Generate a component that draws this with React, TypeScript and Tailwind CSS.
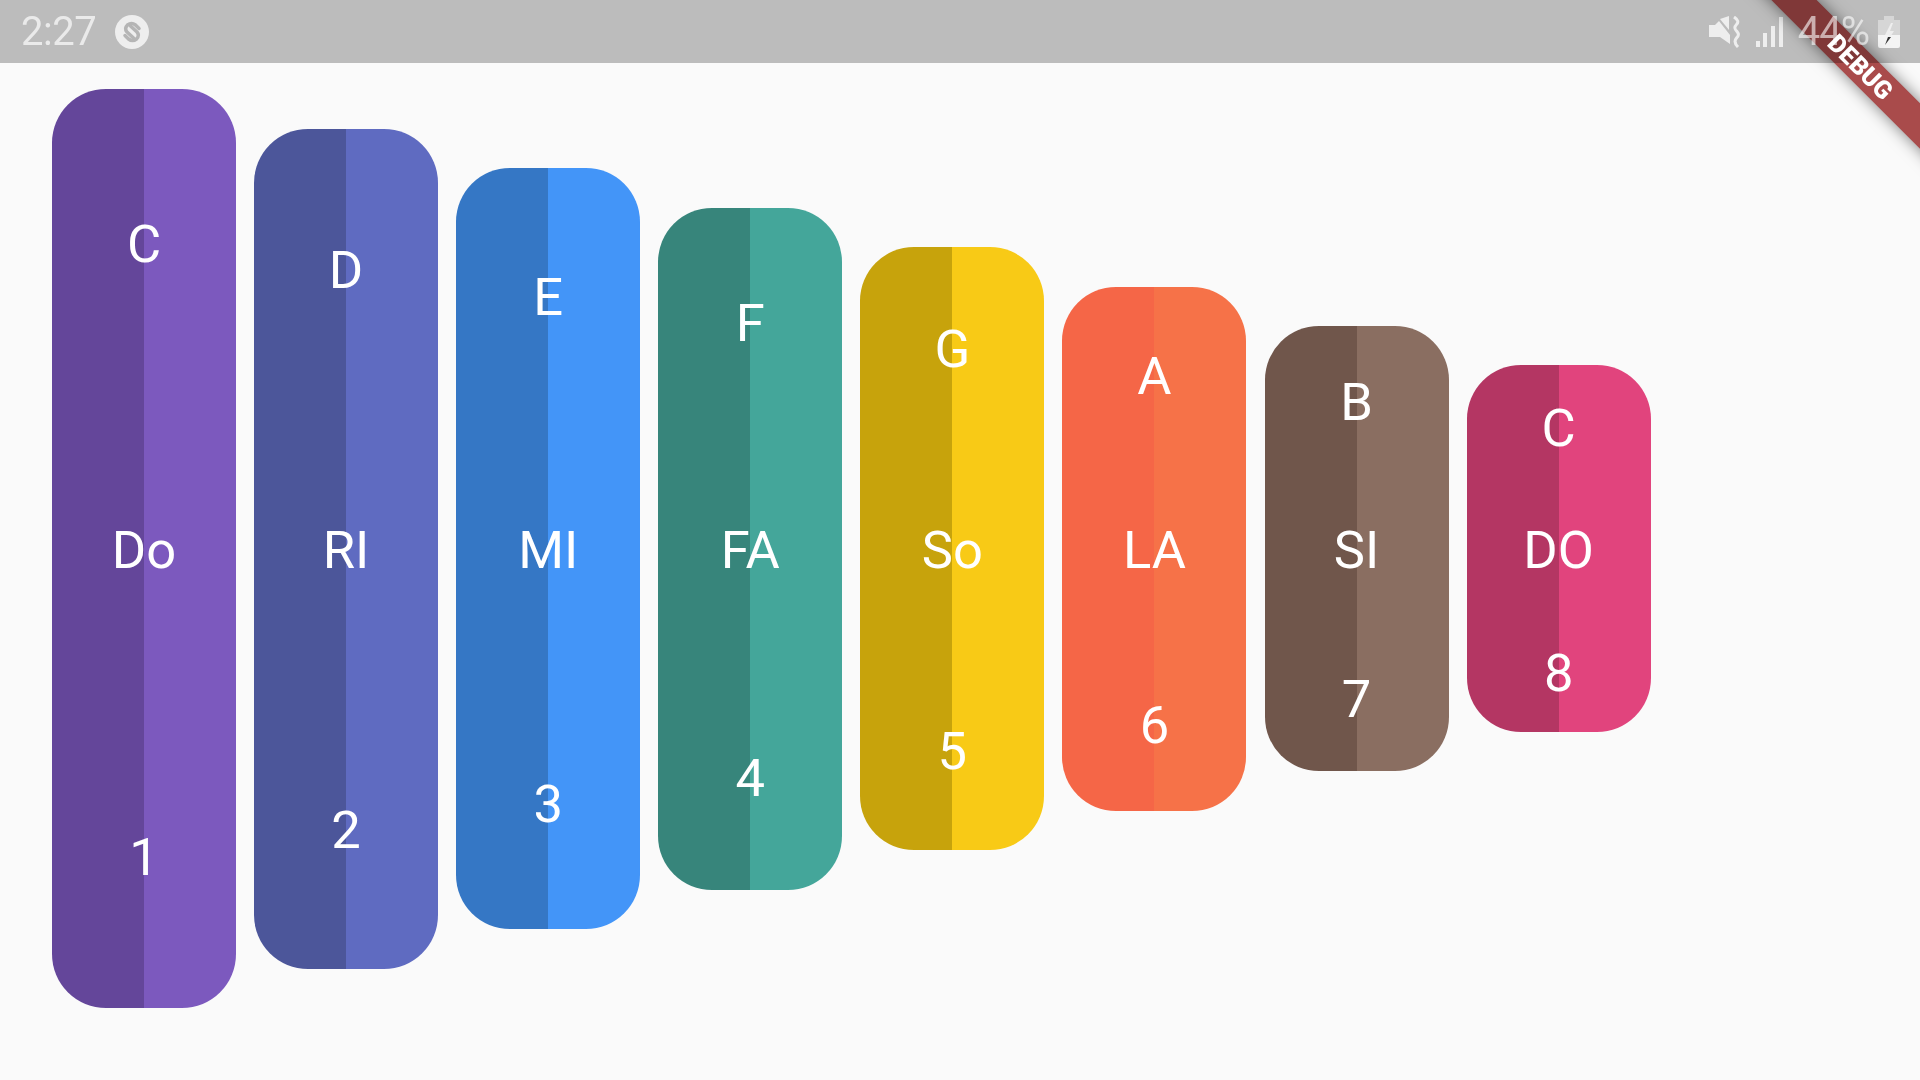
const bars = [
  { h: 919, dark: "bg-[#64469a]", light: "bg-[#7c59be]", t: "C", m: "Do", b: "1" },
  { h: 840, dark: "bg-[#4c569a]", light: "bg-[#5f6bc1]", t: "D", m: "RI", b: "2" },
  { h: 761, dark: "bg-[#3577c5]", light: "bg-[#4395f8]", t: "E", m: "MI", b: "3" },
  { h: 682, dark: "bg-[#37857b]", light: "bg-[#44a69a]", t: "F", m: "FA", b: "4" },
  { h: 603, dark: "bg-[#c7a30c]", light: "bg-[#f8ca16]", t: "G", m: "So", b: "5" },
  { h: 524, dark: "bg-[#f56647]", light: "bg-[#f67248]", t: "A", m: "LA", b: "6" },
  { h: 445, dark: "bg-[#70564b]", light: "bg-[#8a6e61]", t: "B", m: "SI", b: "7" },
  { h: 367, dark: "bg-[#b43663]", light: "bg-[#e1447d]", t: "C", m: "DO", b: "8" },
];

export default function App() {
  return (
    <div className="relative w-[1920px] h-[1080px] overflow-hidden bg-[#fafafa] font-['Roboto',sans-serif]">
      <div className="h-[63px] bg-[#bcbcbc] flex items-center pl-[21px] pr-[20px] text-[#eaeaea]">
        <span className="text-[40px] font-normal tracking-[-0.5px] leading-none">2:27</span>
        <svg className="ml-[19px]" width="34" height="34" viewBox="0 0 34 34">
          <circle cx="17" cy="17" r="17" fill="#eeeeee" />
          <path d="M24 13.5 L20.5 10 Q16.5 7 12.5 10 Q9 13.5 12 17 L18.5 23" fill="none" stroke="#b5b5b5" strokeWidth="3.5" strokeLinecap="round" strokeLinejoin="round" />
          <path d="M10 20.5 L13.5 24 Q17.5 27 21.5 24 Q25 20.5 22 17 L15.5 11" fill="none" stroke="#b5b5b5" strokeWidth="3.5" strokeLinecap="round" strokeLinejoin="round" />
        </svg>
        <div className="ml-auto flex items-center">
          <svg width="32" height="32" viewBox="0 0 32 32">
            <path d="M0 9 H6 L10 5 L21 19 V28 L11 21 H0 Z" fill="#eeeeee" />
            <path d="M11 3 L20 0 V14 Z" fill="#eeeeee" />
            <path d="M25 1 Q31 5 27.5 8.5 Q24 12 28 15.5 Q31 19 27.5 22 Q24 26 29 31" fill="none" stroke="#eeeeee" strokeWidth="3" />
          </svg>
          <svg className="ml-[15px]" width="28" height="30" viewBox="0 0 28 30">
            <rect x="0" y="24" width="4" height="6" fill="#eeeeee" />
            <rect x="7" y="16" width="4" height="14" fill="#eeeeee" />
            <rect x="15" y="9" width="4" height="21" fill="#eeeeee" />
            <rect x="23" y="0" width="4" height="30" fill="#eeeeee" />
          </svg>
          <span className="relative z-10 ml-[14px] text-[40px] font-normal tracking-[-1px] leading-none text-white/60">44%</span>
          <svg className="ml-[9px]" width="22" height="32" viewBox="0 0 22 32">
            <rect x="6" y="0" width="10" height="4" fill="#d6d6d6" />
            <rect x="0" y="4" width="22" height="15" fill="#d6d6d6" />
            <path d="M0 19 H22 V30 Q22 32 20 32 H2 Q0 32 0 30 Z" fill="#f4f4f4" />
            <path d="M13 7 L7 19 H11 L7 29 L16 15 H12 L15 7 Z" fill="#eeeeee" />
            <path d="M10 21 L7 29 L13 21 Z" fill="#333333" />
          </svg>
        </div>
      </div>

      <div className="h-[971px] flex items-center pl-[52px] gap-[18.1px]">
        {bars.map((bar) => (
          <div key={bar.b} className="relative w-[184px] rounded-[54px] overflow-hidden flex" style={{ height: bar.h }}>
            <div className={`flex-1 ${bar.dark}`} />
            <div className={`flex-1 ${bar.light}`} />
            <div className="absolute inset-0 translate-y-[1.5px] grid grid-rows-3 text-center text-white text-[52.5px] leading-none">
              <div className="flex items-center justify-center">{bar.t}</div>
              <div className="flex items-center justify-center">{bar.m}</div>
              <div className="flex items-center justify-center">{bar.b}</div>
            </div>
          </div>
        ))}
      </div>

      <div className="absolute top-0 right-0 w-[220px] h-[220px] overflow-hidden mix-blend-multiply">
        <div className="absolute left-[-40px] top-[49.5px] w-[400px] h-[32px] rotate-45 bg-[#ad4c4c] shadow-[0_0_16px_rgba(0,0,0,0.5)]" />
      </div>
      <div className="absolute z-20 top-0 right-0 w-[220px] h-[220px] overflow-hidden">
        <div className="absolute left-[-40px] top-[49.5px] w-[400px] h-[32px] rotate-45 flex items-center justify-center pl-[2px] text-white text-[25px] font-black leading-none">
          DEBUG
        </div>
      </div>
    </div>
  );
}
